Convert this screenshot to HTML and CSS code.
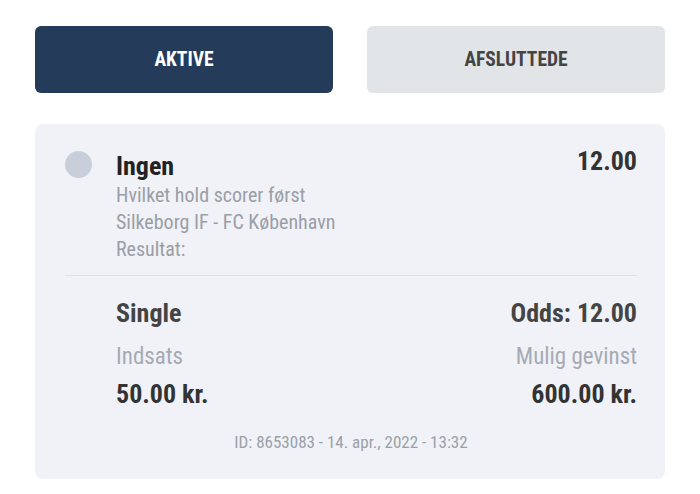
FILE: index.html
```html
<!DOCTYPE html>
<html lang="da">
<head>
    <meta charset="UTF-8">
    <meta name="viewport" content="width=device-width, initial-scale=1.0">
    <title>Mine spil</title>
    <link rel="stylesheet" href="styles.css">
</head>
<body>

<!-- Tabs -->
<div class="tabs">
    <button class="tab tab-active">AKTIVE</button>
    <button class="tab">AFSLUTTEDE</button>
</div>

<!-- Bet card -->
<div class="bet-card">
    <div class="selection">
        <span class="dot"></span>
        <div class="selection-info">
            <div class="selection-name">Ingen</div>
            <div class="selection-meta">Hvilket hold scorer først</div>
            <div class="selection-meta">Silkeborg IF - FC København</div>
            <div class="selection-meta">Resultat:</div>
        </div>
        <div class="selection-odds">12.00</div>
    </div>

    <div class="summary">
        <div class="row">
            <span class="bet-type">Single</span>
            <span class="bet-type">Odds: 12.00</span>
        </div>
        <div class="row">
            <span class="label">Indsats</span>
            <span class="label">Mulig gevinst</span>
        </div>
        <div class="row">
            <span class="amount">50.00 kr.</span>
            <span class="amount">600.00 kr.</span>
        </div>
        <div class="bet-id">ID: 8653083 - 14. apr., 2022 - 13:32</div>
    </div>
</div>

</body>
</html>
```

FILE: styles.css
```css
body {
    font-family: "Roboto Condensed", Roboto, "Liberation Sans Narrow", sans-serif;
    font-stretch: condensed;
    background-color: #fff;
    color: #333;
    margin: 0;
    padding: 26px 35px;
}
.tabs {
    display: flex;
    gap: 34px;
}
.tab {
    flex: 1;
    height: 67px;
    border: none;
    border-radius: 6px;
    background-color: #e1e5e8;
    color: #444;
    font-family: inherit;
    font-stretch: condensed;
    font-size: 19.5px;
    font-weight: bold;
    cursor: pointer;
}
.tab-active {
    background-color: #243b5a;
    color: #fff;
}
.bet-card {
    margin-top: 31px;
    background-color: #f0f2f7;
    border-radius: 8px;
    padding: 0 28px 0 30px;
    height: 355px;
}
.selection {
    display: flex;
    align-items: flex-start;
    padding: 26px 0 12px;
    border-bottom: 1px solid #dde2ea;
}
.dot {
    width: 27px;
    height: 27px;
    border-radius: 50%;
    background-color: #c8cfdb;
    margin: 1px 24px 0 0;
    flex-shrink: 0;
}
.selection-info {
    flex: 1;
}
.selection-name {
    font-size: 26px;
    font-weight: bold;
    color: #222;
    line-height: 32px;
}
.selection-meta {
    font-size: 20px;
    color: #9a9ea6;
    line-height: 27px;
}
.selection-odds {
    font-size: 26px;
    font-weight: bold;
    color: #333;
    line-height: 22px;
}
.summary {
    padding: 19px 0 0 51px;
}
.row {
    display: flex;
    justify-content: space-between;
    align-items: center;
}
.bet-type {
    font-size: 26px;
    font-weight: bold;
    color: #444;
    line-height: 36px;
}
.label {
    font-size: 23px;
    color: #a6aab3;
    line-height: 52px;
}
.amount {
    font-size: 26px;
    font-weight: bold;
    color: #333;
    line-height: 22px;
}
.bet-id {
    text-align: center;
    font-size: 17px;
    color: #9aa0a8;
    margin: 27px 0 0 -51px;
}
```
